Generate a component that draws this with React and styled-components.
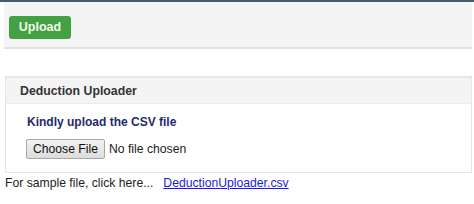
import React from "react";
import styled, { createGlobalStyle } from "styled-components";

const Global = createGlobalStyle`
  html, body { margin: 0; padding: 0; background: #fff; }
  body { font-family: "Liberation Sans", Arial, sans-serif; font-size: 12px; color: #333; }
`;

const TopBar = styled.div`
  height: 2px;
  background: #4b5a68;
`;

const Toolbar = styled.div`
  margin: 0 2px 0 4px;
  height: 45px;
  background: #f4f4f4;
  border-bottom: 2px solid #e2e2e2;
  display: flex;
  align-items: center;
  padding-left: 5px;
`;

const GreenButton = styled.button`
  width: 62px;
  height: 23px;
  border: none;
  border-radius: 3px;
  background: #43a043;
  color: #f4f8e8;
  font-family: "Liberation Sans", Arial, sans-serif;
  font-weight: bold;
  font-size: 12.5px;
  padding: 0;
  margin-top: 5px;
`;

const Panel = styled.div`
  margin: 27px 2px 0 5px;
  border: 1px solid #e6e6e6;
  border-top-width: 2px;
`;

const PanelHeader = styled.div`
  height: 25px;
  background: #f4f4f4;
  border-bottom: 1px solid #ececec;
  display: flex;
  align-items: center;
  padding-left: 14px;
  font-weight: bold;
  font-size: 12.3px;
  color: #333;
`;

const PanelBody = styled.div`
  padding: 11px 0 13px 20px;
  display: flex;
  flex-direction: column;
  gap: 10px;
`;

const Title = styled.div`
  font-weight: bold;
  font-size: 12px;
  line-height: 14px;
  color: #262a6b;
  padding-left: 1px;
`;

const FileRow = styled.div`
  display: flex;
  align-items: center;
  gap: 4px;
  font-size: 12.2px;
  color: #222;
`;

const ChooseButton = styled.div`
  width: 79px;
  height: 20px;
  box-sizing: border-box;
  border: 1px solid #a8a8a8;
  border-radius: 2px;
  background: linear-gradient(#f2f2f2, #dcdcdc);
  display: flex;
  align-items: center;
  justify-content: center;
  font-size: 12.2px;
  color: #111;
`;

const Footer = styled.div`
  margin: 3px 0 0 5px;
  font-size: 12.2px;
  line-height: 14px;
  color: #222;
  display: flex;
  gap: 10px;
`;

const Link = styled.a`
  color: #1a1ae0;
  text-decoration: underline;
`;

export default function App() {
  return (
    <>
      <Global />
      <TopBar />
      <Toolbar>
        <GreenButton>Upload</GreenButton>
      </Toolbar>
      <Panel>
        <PanelHeader>Deduction Uploader</PanelHeader>
        <PanelBody>
          <Title>Kindly upload the CSV file</Title>
          <FileRow>
            <ChooseButton>Choose File</ChooseButton>
            <span>No file chosen</span>
          </FileRow>
        </PanelBody>
      </Panel>
      <Footer>
        <span>For sample file, click here...</span>
        <Link href="#">DeductionUploader.csv</Link>
      </Footer>
    </>
  );
}
